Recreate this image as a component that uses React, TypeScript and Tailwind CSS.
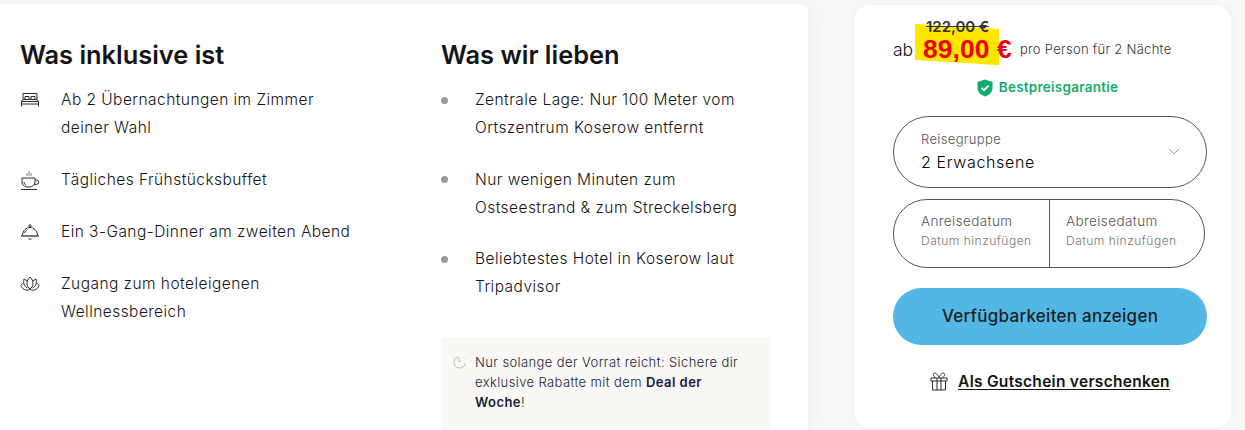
import React from "react";

const Bed = () => (
  <svg width="20" height="16" viewBox="0 0 20 16" fill="none" stroke="#2b2b2b" strokeWidth="1">
    <path d="M3 7.500V1.500h14V7.500" />
    <path d="M5 7.500V4.500h4V7.500M11 7.500V4.500h4V7.500" />
    <path d="M1.500 14.500V9.500L3 7.500h14l1.500 2v5" />
    <path d="M1.500 9.500h17M1.500 12h17" />
  </svg>
);
const Cup = () => (
  <svg width="20" height="21" viewBox="0 0 20 21" fill="none" stroke="#2b2b2b" strokeWidth="1">
    <path d="M9 1v5M7 3v3M11 3v3" stroke="#888" />
    <path d="M2 8h13v4c0 3-2.500 5-6.500 5S2 15 2 12z" />
    <path d="M15 10h1.500a2.200 2.200 0 0 1 0 4.400H14" />
    <path d="M4 12c0 1.500 1 2.500 2 3" />
    <path d="M1 19.500h16" />
  </svg>
);
const Cloche = () => (
  <svg width="20" height="16" viewBox="0 0 20 16" fill="none" stroke="#2b2b2b" strokeWidth="1">
    <circle cx="10" cy="2" r="1.200" />
    <path d="M2.500 11c.5-4.500 3.500-7.500 7.500-7.500s7 3 7.500 7.500" />
    <path d="M4.500 9c.5-1.500 1.500-2.500 3-3.300" />
    <path d="M1 12h18" stroke="#777" strokeWidth="2" />
    <path d="M8.500 15h3" />
  </svg>
);
const Lotus = () => (
  <svg width="20" height="17" viewBox="0 0 20 17" fill="none" stroke="#2b2b2b" strokeWidth="1">
    <path d="M10 1c2 2 3 4 3 6.500S11.500 12 10 13c-1.500-1-3-3-3-5.500S8 3 10 1z" />
    <path d="M7.300 5.500C6.500 4.500 5.500 3.800 4 3c-.8 3-.5 7 3.500 9M12.700 5.500c.8-1 1.800-1.700 3.300-2.500.8 3 .5 7-3.500 9" />
    <path d="M3.500 7.500C2.500 7.500 1.500 8 1 9.500c.8 3 4.500 6 9 4 4.500 2 8.200-1 9-4-.5-1.500-1.500-2-2.500-2" />
  </svg>
);
const Gift = () => (
  <svg width="18" height="19" viewBox="0 0 18 19" fill="none" stroke="#2b2b2b" strokeWidth="1">
    <path d="M1 6h16v3H1zM2.500 9v9h13V9M7 6v12M11 6v12" />
    <path d="M9 5.500C7.500 2 5.500 .8 4.200 1.200 2.800 1.700 3 4.500 5.500 5.500M9 5.500c1.500-3.500 3.500-4.700 4.800-4.300 1.400.5 1.200 3.300-1.300 4.300" />
  </svg>
);
const Shield = () => (
  <svg width="16" height="18" viewBox="0 0 16 18">
    <path d="M8 .5 15.500 3v6c0 4-3 7-7.500 8.500C3.500 16 .5 13 .5 9V3z" fill="#10ac6e" />
    <path d="M4.500 8.800 7 11.200l4.500-4.500" fill="none" stroke="#fff" strokeWidth="1.800" />
  </svg>
);
const Moon = () => (
  <svg width="13" height="13" viewBox="0 0 13 13" fill="none" stroke="#bdbdbd" strokeWidth="1">
    <path d="M6 1a5.500 5.500 0 1 0 6 6.500" />
    <path d="M6 1.500V6l2-1.500M9.500 1.500l.8.8M11.500 3.500l.5.5" />
  </svg>
);

const inclusive = [
  { icon: <Bed />, lines: ["Ab 2 Übernachtungen im Zimmer", "deiner Wahl"] },
  { icon: <Cup />, lines: ["Tägliches Frühstücksbuffet"] },
  { icon: <Cloche />, lines: ["Ein 3-Gang-Dinner am zweiten Abend"] },
  { icon: <Lotus />, lines: ["Zugang zum hoteleigenen", "Wellnessbereich"] },
];
const love = [
  ["Zentrale Lage: Nur 100 Meter vom", "Ortszentrum Koserow entfernt"],
  ["Nur wenigen Minuten zum", "Ostseestrand & zum Streckelsberg"],
  ["Beliebtestes Hotel in Koserow laut", "Tripadvisor"],
];

export default function App() {
  return (
    <div className="w-[1245px] h-[430px] overflow-hidden bg-[#faf9f7] flex items-start font-['Inter',sans-serif] text-[#141414]">
      <div className="w-[808px] h-[430px] mt-[4px] bg-white rounded-tr-lg shadow-[0_0_24px_rgba(0,0,0,0.06)] flex pl-[21px] pt-[37px]">
        <div className="w-[420px]">
          <h2 className="text-[25.400px] leading-[28px] font-semibold mb-[17px] -ml-px">Was inklusive ist</h2>
          <ul className="flex flex-col gap-[24px]">
            {inclusive.map((it) => (
              <li key={it.lines[0]} className="flex">
                <span className="w-[40px] h-[28px] flex items-center shrink-0 -ml-px pr-px">{it.icon}</span>
                <span className="ml-px text-[15.500px] tracking-[0.45px] leading-[28px] font-light">
                  {it.lines.map((l) => (
                    <span key={l} className="block whitespace-nowrap">{l}</span>
                  ))}
                </span>
              </li>
            ))}
          </ul>
        </div>
        <div className="w-[330px]">
          <h2 className="text-[25.400px] leading-[28px] font-semibold mb-[17px]">Was wir lieben</h2>
          <ul className="flex flex-col gap-[23.500px]">
            {love.map((it) => (
              <li key={it[0]} className="flex">
                <span className="w-[34px] h-[28px] flex items-center shrink-0">
                  <span className="w-[7px] h-[7px] rounded-full bg-[#9a9a9a]" />
                </span>
                <span className="text-[15.500px] tracking-[0.45px] leading-[28px] font-light">
                  {it.map((l) => (
                    <span key={l} className="block whitespace-nowrap">{l}</span>
                  ))}
                </span>
              </li>
            ))}
          </ul>
          <div className="mt-[36px] h-[92px] bg-[#faf8f5] flex pl-[12px] pt-[15px]">
            <span className="w-[22px] pt-[4px] shrink-0"><Moon /></span>
            <p className="text-[13px] tracking-[0.39px] leading-[20px] font-light text-[#1a1a3a] whitespace-nowrap">
              Nur solange der Vorrat reicht: Sichere dir<br />
              exklusive Rabatte mit dem <b className="font-semibold tracking-[0.45px]">Deal der</b><br />
              <b className="font-semibold tracking-[0.45px]">Woche</b>!
            </p>
          </div>
        </div>
      </div>
      <div className="ml-[46px] mt-[5px] w-[377px] h-[423px] bg-white rounded-2xl shadow-[0_0_10px_rgba(0,0,0,0.05)] px-[39px] flex flex-col">
        <div className="relative h-[60px]">
          <div className="absolute left-[22px] top-[19px] w-[84px] h-[42px] bg-[#ffe600] [clip-path:polygon(0_0,100%_12%,100%_98%,55%_92%,0_86%)]" />
          <div className="relative pt-[14px] pl-[33px] text-[15px] leading-[15px] font-semibold text-[#333] line-through">122,00 €</div>
          <div className="relative flex items-center h-[30px] whitespace-nowrap">
            <span className="text-[17.500px] leading-[24px] font-light w-[30px] pt-[2px]">ab</span>
            <span className="font-['Liberation_Sans',sans-serif] font-bold text-[#f00000] text-[26.400px] leading-[24px] tracking-[0.1px] w-[97px]">89,00 €</span>
            <span className="text-[13px] tracking-[0.28px] font-light text-[#333] pt-[2px]">pro Person für 2 Nächte</span>
          </div>
        </div>
        <div className="h-[21px] mt-[12px] flex items-center justify-center gap-[6px] pl-[10px]">
          <Shield />
          <span className="text-[13.500px] tracking-[0.25px] font-semibold text-[#10ac6e]">Bestpreisgarantie</span>
        </div>
        <div className="mt-[18px] w-[314px] h-[72px] rounded-[36px] border border-[#555] pl-[27px] pr-[26px] flex items-center justify-between">
          <div>
            <div className="text-[13px] tracking-[0.35px] leading-[16px] font-light text-[#555]">Reisegruppe</div>
            <div className="text-[16px] tracking-[0.65px] leading-[24px] font-light text-black mt-[3px]">2 Erwachsene</div>
          </div>
          <svg width="12" height="8" viewBox="0 0 12 8" fill="none" stroke="#9a8a9a" strokeWidth="0.9"><path d="m1 1 5 5 5-5" /></svg>
        </div>
        <div className="mt-[11px] w-[312px] h-[69px] rounded-[34px] border border-[#555] flex">
          <div className="w-[156px] border-r border-[#555] pl-[27px] pt-[12px]">
            <div className="text-[13.500px] tracking-[0.4px] leading-[18px] font-light text-[#555]">Anreisedatum</div>
            <div className="text-[12px] tracking-[0.5px] leading-[18px] font-light text-[#777] mt-[2px] whitespace-nowrap">Datum hinzufügen</div>
          </div>
          <div className="flex-1 pl-[16px] pt-[12px]">
            <div className="text-[13.500px] tracking-[0.4px] leading-[18px] font-light text-[#555]">Abreisedatum</div>
            <div className="text-[12px] tracking-[0.5px] leading-[18px] font-light text-[#777] mt-[2px] whitespace-nowrap">Datum hinzufügen</div>
          </div>
        </div>
        <div className="mt-[20px] w-[314px] h-[57px] rounded-[29px] bg-[#52b7e4] flex items-center justify-center text-[17px] tracking-[0.25px] font-medium text-[#1f1f1f]">
          Verfügbarkeiten anzeigen
        </div>
        <div className="mt-[25px] w-[314px] flex items-center justify-center gap-[10px]">
          <Gift />
          <span className="text-[15.500px] tracking-[0.28px] font-semibold underline underline-offset-2">Als Gutschein verschenken</span>
        </div>
      </div>
    </div>
  );
}
